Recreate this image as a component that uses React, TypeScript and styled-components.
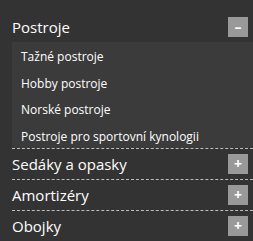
import React from 'react';
import styled, { createGlobalStyle } from 'styled-components';

const GlobalStyle = createGlobalStyle`
    body {
        margin: 0;
        background: #333333;
        font-family: "Open Sans", "Noto Sans", sans-serif;
    }
`;

const Menu = styled.ul`
    list-style: none;
    margin: 0;
    padding: 12px 0 0 12px;
`;

const Category = styled.li<{ $open?: boolean }>`
    border-bottom: 1px dashed #bdbdbd;
`;

const CategoryHead = styled.div`
    display: flex;
    align-items: center;
    justify-content: space-between;
    height: 30px;
    padding-right: 5px;
`;

const CategoryTitle = styled.a`
    color: #ffffff;
    font-size: 15px;
    text-decoration: none;
`;

const Toggle = styled.span`
    display: flex;
    align-items: center;
    justify-content: center;
    width: 20px;
    height: 20px;
    background: #999999;
    color: #ffffff;
    font-size: 14px;
    font-weight: 700;
    line-height: 1;
`;

const SubList = styled.ul`
    list-style: none;
    margin: 0;
    padding: 0;
    background: #3b3b3b;
`;

const SubItem = styled.li`
    height: 26.5px;
    line-height: 26.5px;
    padding-left: 9px;
`;

const SubLink = styled.a`
    color: #ffffff;
    font-size: 12px;
    text-decoration: none;
`;

type CategoryData = {
    title: string;
    children?: string[];
};

const categories: CategoryData[] = [
    {
        title: 'Postroje',
        children: ['Tažné postroje', 'Hobby postroje', 'Norské postroje', 'Postroje pro sportovní kynologii'],
    },
    { title: 'Sedáky a opasky' },
    { title: 'Amortizéry' },
    { title: 'Obojky' },
];

const App = () => {
    return (
        <>
            <GlobalStyle />
            <Menu>
                {categories.map((cat) => {
                    const open = !!cat.children;
                    return (
                        <Category key={cat.title} $open={open}>
                            <CategoryHead>
                                <CategoryTitle href="#">{cat.title}</CategoryTitle>
                                <Toggle>{open ? '–' : '+'}</Toggle>
                            </CategoryHead>
                            {open && (
                                <SubList>
                                    {cat.children!.map((c) => (
                                        <SubItem key={c}>
                                            <SubLink href="#">{c}</SubLink>
                                        </SubItem>
                                    ))}
                                </SubList>
                            )}
                        </Category>
                    );
                })}
            </Menu>
        </>
    );
};

export default App;
